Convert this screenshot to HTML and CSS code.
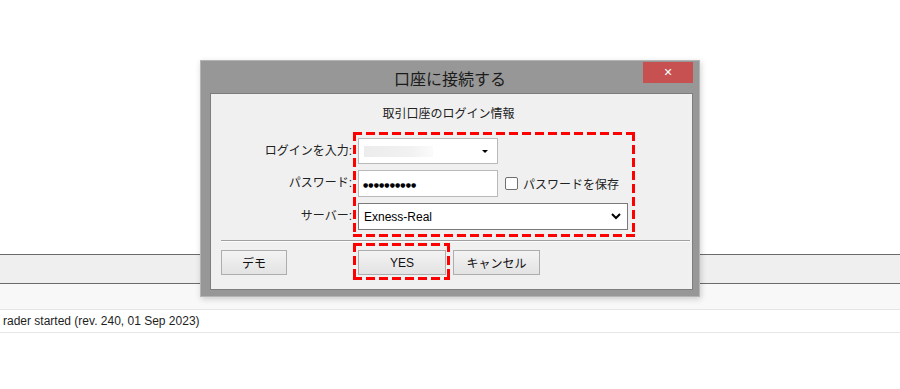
FILE: index.html
```html
<!DOCTYPE html>
<html lang="ja">
<head>
  <meta charset="UTF-8">
  <title>口座に接続する</title>
  <link rel="stylesheet" href="styles.css">
</head>
<body>
  <div class="top-space"></div>
  <div class="toolbar"></div>
  <div class="tab-strip"></div>
  <div class="log-row">rader started (rev. 240, 01 Sep 2023)</div>

  <div class="dialog">
    <div class="title-bar">
      <span class="title">口座に接続する</span>
      <span class="close">&#x2715;</span>
    </div>
    <div class="panel">
      <div class="heading">取引口座のログイン情報</div>
      <div class="form">
        <label class="lbl row1">ログインを入力:</label>
        <div class="field combo row1">
          <span class="blurred"></span>
          <span class="arrow"></span>
        </div>

        <label class="lbl row2">パスワード:</label>
        <div class="pw-row row2">
          <div class="field pw"><span class="dots">●●●●●●●●●●</span></div>
          <span class="check"></span>
          <span class="check-text">パスワードを保存</span>
        </div>

        <label class="lbl row3">サーバー:</label>
        <div class="field select row3">
          <span>Exness-Real</span>
          <svg width="10" height="7" viewBox="0 0 10 7"><polyline points="1,1 5,5 9,1" fill="none" stroke="#000" stroke-width="2"/></svg>
        </div>

        <div class="dash-box mark-fields"></div>
      </div>
      <div class="sep"></div>
      <div class="buttons">
        <button class="btn demo">デモ</button>
        <div class="btn-group">
          <span class="dash-box mark-yes"><button class="btn yes">YES</button></span>
          <button class="btn cancel">キャンセル</button>
        </div>
      </div>
    </div>
  </div>
</body>
</html>
```

FILE: styles.css
```css
body {
  margin: 0;
  width: 900px;
  height: 389px;
  overflow: hidden;
  background: #fff;
  font-family: "Liberation Sans", "Noto Sans CJK JP", sans-serif;
  font-size: 12px;
  color: #222;
  position: relative;
}
.top-space {
  height: 254px;
}
.toolbar {
  height: 28px;
  background: #efefef;
  border-top: 1px solid #6b6b6b;
  border-bottom: 1px solid #6b6b6b;
}
.tab-strip {
  height: 25px;
  background: #f8f8f8;
  border-bottom: 1px solid #e6e6e6;
}
.log-row {
  height: 22px;
  line-height: 22px;
  border-bottom: 1px solid #e6e6e6;
  padding-left: 3px;
  color: #1e1e1e;
}

.dialog {
  position: absolute;
  left: 200px;
  top: 60px;
  width: 500px;
  height: 237px;
  box-sizing: border-box;
  background: #979797;
  border: 1px solid #b4b4b4;
  box-shadow: 1px 2px 6px rgba(0,0,0,0.18);
  display: flex;
  flex-direction: column;
}
.title-bar {
  height: 32px;
  display: flex;
  align-items: center;
  justify-content: center;
  position: relative;
}
.title {
  font-size: 16px;
  color: #1b1b1b;
  margin-top: 1px;
}
.close {
  position: absolute;
  left: 442px;
  top: 1px;
  width: 50px;
  height: 21px;
  background: #c75050;
  color: #fff;
  font-family: "DejaVu Sans", sans-serif;
  font-size: 11px;
  font-weight: bold;
  display: flex;
  align-items: center;
  justify-content: center;
}
.panel {
  flex: 1;
  margin: 0 6px 6px 9px;
  background: #f0f0f0;
  border: 1px solid #7d7d7d;
}
.heading {
  text-align: center;
  line-height: 16px;
  padding-top: 12px;
  margin-bottom: 16px;
  margin-left: -6px;
}
.form {
  display: grid;
  grid-template-columns: 140px 270px;
  grid-template-rows: 26px 27px 27px;
  column-gap: 7px;
  row-gap: 6px;
}
.row1 { grid-row: 1; }
.row2 { grid-row: 2; }
.row3 { grid-row: 3; }
.lbl {
  grid-column: 1;
  text-align: right;
  line-height: 26px;
  margin-right: -1px;
  white-space: nowrap;
}
.field {
  grid-column: 2;
  box-sizing: border-box;
  background: #fff;
  border: 1px solid #b9b9b9;
  display: flex;
  align-items: center;
}
.combo {
  width: 140px;
  justify-content: space-between;
  padding: 0 9px 0 5px;
}
.blurred {
  width: 69px;
  height: 11px;
  background: linear-gradient(90deg, #ececec, #f2f2f2 70%, #fbfbfb);
}
.arrow {
  width: 0;
  height: 0;
  border-left: 3px solid transparent;
  border-right: 3px solid transparent;
  border-top: 3px solid #000;
  margin-top: 1px;
}
.pw-row {
  grid-column: 2;
  display: flex;
  align-items: center;
  white-space: nowrap;
}
.pw {
  width: 140px;
  height: 27px;
  flex: none;
  padding-left: 4px;
}
.dots {
  font-family: "DejaVu Sans", sans-serif;
  font-size: 6px;
  letter-spacing: 0.1px;
  color: #000;
  margin-top: 1px;
}
.check {
  flex: none;
  width: 13px;
  height: 13px;
  box-sizing: border-box;
  border: 1px solid #707070;
  border-radius: 2px;
  background: #fff;
  margin-left: 7px;
}
.check-text {
  margin-left: 5px;
}
.select {
  border-color: #7a7a7a;
  justify-content: space-between;
  padding: 0 6px 0 5px;
  color: #000;
}

/* red dashed annotation frames: 9px dash, 4px gap */
.dash-box {
  box-sizing: border-box;
  background:
    repeating-linear-gradient(90deg, #f00 0 9px, transparent 9px 13px) top left / 100% 3px no-repeat,
    repeating-linear-gradient(90deg, #f00 0 9px, transparent 9px 13px) bottom left / 100% 3px no-repeat,
    repeating-linear-gradient(180deg, #f00 0 9px, transparent 9px 13px) top left / 3px 100% no-repeat,
    repeating-linear-gradient(180deg, #f00 0 9px, transparent 9px 13px) top right / 3px 100% no-repeat;
}
.mark-fields {
  grid-column: 2;
  grid-row: 1 / 4;
  margin: -6px -7px -7px -5px;
  pointer-events: none;
}
.sep {
  height: 1px;
  background: #a0a0a0;
  border-bottom: 1px solid #fcfcfc;
  margin: 10px 2px 0 10px;
}
.buttons {
  display: grid;
  grid-template-columns: 140px 270px;
  column-gap: 7px;
  margin-top: 8px;
}
.btn {
  height: 25px;
  box-sizing: border-box;
  border: 1px solid #adadad;
  background: linear-gradient(#f3f3f3, #e3e3e3);
  font-family: "Liberation Sans", "Noto Sans CJK JP", sans-serif;
  font-size: 12px;
  color: #111;
  padding: 0;
}
.demo {
  width: 66px;
  margin-left: 10px;
}
.btn-group {
  display: flex;
  align-items: flex-start;
}
.mark-yes {
  display: block;
  padding: 7px 4px 5px 5px;
  margin: -7px 3px -5px -5px;
}
.yes {
  width: 88px;
  display: block;
}
.cancel {
  width: 87px;
}
```
